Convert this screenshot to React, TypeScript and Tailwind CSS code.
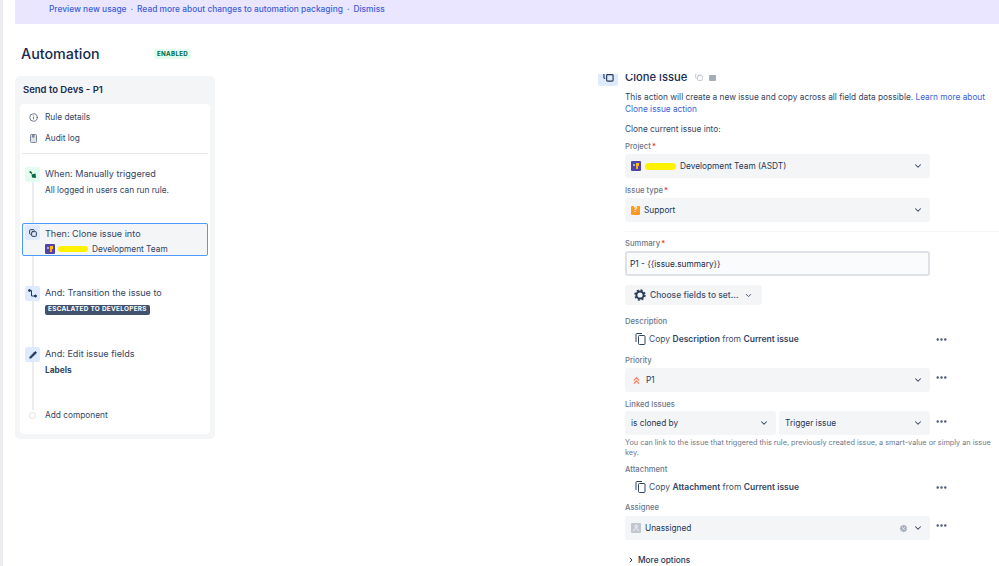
import type { ReactNode } from 'react';
import { ChevronDown, ChevronRight, Info, Pencil, MoreHorizontal, Copy, XCircle, ChevronsUp, User } from 'lucide-react';

function ProjectIcon() {
  return (
    <svg width="10" height="10" viewBox="0 0 10 10" className="shrink-0">
      <rect width="10" height="10" rx="1" fill="#5243AA" />
      <rect x="5" y="2" width="3" height="3" fill="#FFC400" />
      <rect x="2" y="3" width="2" height="2" fill="#B3A5F0" />
      <rect x="5" y="5" width="2" height="3" fill="#FFAB00" />
    </svg>
  );
}

function TransitionIcon() {
  return (
    <svg width="9" height="9" viewBox="0 0 9 9" fill="none" stroke="#253858" strokeWidth="1">
      <path d="M1.5 1.5h2v5.5h4" />
      <circle cx="1.5" cy="1.5" r="1" fill="#253858" />
      <circle cx="7.5" cy="7" r="1" fill="#253858" />
    </svg>
  );
}

function PointerIcon() {
  return (
    <svg width="9" height="9" viewBox="0 0 9 9" fill="#006644">
      <path d="M1 2 L2.5 1 L4.5 3 L3.5 4 Z" />
      <path d="M3.5 4.5 L7.5 3.5 L8 8 L4 7.5 Z" />
    </svg>
  );
}

function AuditIcon() {
  return (
    <svg width="7" height="9" viewBox="0 0 7 9" className="mr-[8px] ml-[8px] shrink-0">
      <rect x="0.5" y="0.5" width="6" height="8" rx="1" fill="#DFE1E6" stroke="#7A869A" />
      <rect x="2" y="0.5" width="2.5" height="3" fill="#7A869A" />
    </svg>
  );
}

function GearIcon() {
  return (
    <svg width="12" height="12" viewBox="0 0 12 12" fill="none" stroke="#253858" className="mr-[4px] shrink-0">
      <circle cx="6" cy="6" r="3.6" strokeWidth="2" />
      <circle cx="6" cy="6" r="5" strokeWidth="1.4" strokeDasharray="2 1.93" />
    </svg>
  );
}

function CopyFieldIcon() {
  return (
    <svg width="11" height="12" viewBox="0 0 11 12" fill="none" stroke="#344563" strokeWidth="1" className="mr-[3px] shrink-0">
      <rect x="3.5" y="2.5" width="6.5" height="9" rx="1" />
      <path d="M1 9V1.5A1 1 0 0 1 2 .5h5" />
    </svg>
  );
}

function StepIcon({ green, children }: { green?: boolean; children: ReactNode }) {
  return (
    <div className={`flex h-[15px] w-[15px] shrink-0 items-center justify-center rounded-[2px] ${green ? 'bg-[#E3FCEF] text-[#006644]' : 'bg-[#DEEBFF] text-[#253858]'}`}>
      {children}
    </div>
  );
}

function Label({ text, required, className = '' }: { text: string; required?: boolean; className?: string }) {
  return (
    <div className={`h-[12px] text-[7.7px] leading-[12px] font-medium text-[#6B778C] ${className}`}>
      {text}
      {required && <span className="ml-[1px] text-[#DE350B]">*</span>}
    </div>
  );
}

function Select({ children, width = 'w-[305px]', clear }: { children: ReactNode; width?: string; clear?: boolean }) {
  return (
    <div className={`flex h-[24px] shrink-0 items-center rounded-[3px] bg-[#F4F5F7] pr-[7px] pl-[6px] text-[8.3px] text-[#253858] ${width}`}>
      <div className="flex min-w-0 flex-1 items-center gap-[4px]">{children}</div>
      {clear && <XCircle size={9} className="mr-[5px] fill-[#A5ADBA] text-[#F4F5F7]" />}
      <ChevronDown size={10} strokeWidth={2.5} className="text-[#344563]" />
    </div>
  );
}

function Dots({ className = '' }: { className?: string }) {
  return <MoreHorizontal size={13} strokeWidth={2.5} className={`ml-[5px] shrink-0 text-[#42526E] ${className}`} />;
}

function CopyRow({ field }: { field: string }) {
  return (
    <div className="flex h-[20px] items-center pl-[10px] text-[8.5px] text-[#42526E]">
      <CopyFieldIcon />
      <span>
        Copy <b className="font-semibold text-[#344563]">{field}</b> from <b className="font-semibold text-[#344563]">Current issue</b>
      </span>
      <Dots className="ml-auto" />
    </div>
  );
}

function Sidebar() {
  return (
    <div className="w-[200px] shrink-0 rounded-[5px] bg-[#F4F5F7] px-[5px] pb-[5px]">
      <div className="flex h-[28px] items-center pl-[3px] text-[9.5px] font-semibold text-[#172B4D]">Send to Devs - P1</div>
      <div className="flex h-[330px] flex-col rounded-[4px] bg-white px-[2px] text-[#344563]">
        <div className="flex h-[50px] flex-col border-b border-[#E6E8EC] pt-[3px] text-[8.3px]">
          <div className="flex h-[21px] items-center"><Info size={9} className="mr-[7px] ml-[7px] text-[#42526E]" />Rule details</div>
          <div className="flex h-[21px] items-center"><AuditIcon />Audit log</div>
        </div>
        <div className="relative flex flex-1 flex-col">
          <div className="absolute top-[20px] bottom-[24px] left-[9.5px] w-[2px] bg-[#EBECF0]" />
          <div className="relative mt-[13px] flex h-[56px] gap-[5px] pl-[3px]">
            <StepIcon green><PointerIcon /></StepIcon>
            <div>
              <div className="text-[9.1px] leading-[13px]">When: Manually triggered</div>
              <div className="mt-[3px] text-[8.3px] leading-[14px]">All logged in users can run rule.</div>
            </div>
          </div>
          <div className="relative flex h-[33px] w-[186px] gap-[5px] rounded-[2px] border border-[#4C9AFF] bg-[#F4F5F7] pl-[2px]">
            <div className="pt-[1px]"><StepIcon><Copy size={8} strokeWidth={3} /></StepIcon></div>
            <div>
              <div className="pt-[3px] text-[9.1px] leading-[13px]">Then: Clone issue into</div>
              <div className="mt-[3px] flex h-[12px] items-center text-[8.3px]">
                <ProjectIcon />
                <span className="mr-[4px] ml-[3px] h-[6px] w-[30px] rounded-full bg-[#FFF200]" />
                Development Team
              </div>
            </div>
          </div>
          <div className="relative mt-[30px] flex h-[61px] gap-[5px] pl-[3px]">
            <StepIcon><TransitionIcon /></StepIcon>
            <div>
              <div className="text-[9.1px] leading-[13px]">And: Transition the issue to</div>
              <div className="mt-[6px] w-fit rounded-[2px] bg-[#42526E] px-[3px] text-[6.4px] leading-[9.5px] font-bold tracking-[0.3px] text-white">ESCALATED TO DEVELOPERS</div>
            </div>
          </div>
          <div className="relative flex h-[57px] gap-[5px] pl-[3px]">
            <StepIcon><Pencil size={8} fill="currentColor" /></StepIcon>
            <div>
              <div className="text-[9.1px] leading-[13px]">And: Edit issue fields</div>
              <div className="mt-[3px] text-[8.3px] leading-[14px] font-bold">Labels</div>
            </div>
          </div>
          <div className="relative mt-[5px] flex items-center text-[8.3px]">
            <span className="mr-[9px] ml-[7px] h-[7px] w-[7px] rounded-full border border-[#DFE1E6] bg-white" />
            Add component
          </div>
        </div>
      </div>
    </div>
  );
}

function CloneForm() {
  return (
    <div className="w-[374px] shrink-0 text-[#253858]">
      <div className="-ml-[27px] flex h-[12px] items-start overflow-hidden">
        <div className="-mt-[3px] flex h-[15px] w-[20px] shrink-0 items-start justify-center rounded-[2px] bg-[#DEEBFF]"><Copy size={11} strokeWidth={2.5} /></div>
        <div className="-mt-[5px] ml-[7px] flex items-center text-[11.2px] leading-[16px] font-medium text-[#172B4D]">
          Clone issue
          <Copy size={8} className="ml-[8px] text-[#A5ADBA]" />
          <span className="mt-[1px] ml-[6px] h-[6px] w-[7px] rounded-[1px] bg-[#A5ADBA]" />
        </div>
      </div>
      <p className="mt-[5px] text-[8.3px] leading-[12px] text-[#344563]">
        This action will create a new issue and copy across all field data possible. <span className="text-[#3B5FD9]">Learn more about Clone issue action</span>
      </p>
      <div className="mt-[8px] text-[8.3px] leading-[12px] text-[#344563]">Clone current issue into:</div>
      <Label text="Project" required className="mt-[6px]" />
      <div className="mt-[1px]">
        <Select><ProjectIcon /><span className="h-[7px] w-[31px] rounded-full bg-[#FFF200]" />Development Team (ASDT)</Select>
      </div>
      <Label text="Issue type" required className="mt-[7px]" />
      <div className="mt-[1px]">
        <Select>
          <span className="flex h-[9px] w-[9px] items-center justify-center rounded-[1px] bg-[#FF991F] text-[7px] font-bold text-white">?</span>
          Support
        </Select>
      </div>
      <div className="mt-[9px] h-px bg-[#F4F5F7]" />
      <Label text="Summary" required className="mt-[6px]" />
      <div className="mt-[1px] flex h-[25px] w-[305px] items-center rounded-[3px] border-2 border-[#DFE1E6] bg-[#FAFBFC] px-[3px] pt-[1px] text-[8.3px] text-[#172B4D]">
        P1 - {'{{issue.summary}}'}
      </div>
      <div className="mt-[9px] flex h-[20px] w-[137px] items-center rounded-[3px] bg-[#F4F5F7] pl-[9px] text-[8.5px] font-medium text-[#42526E]">
        <GearIcon />
        Choose fields to set...
        <ChevronDown size={9} strokeWidth={2.5} className="ml-[6px]" />
      </div>
      <Label text="Description" className="mt-[11px]" />
      <div className="mt-[1px] w-[323px]"><CopyRow field="Description" /></div>
      <Label text="Priority" className="mt-[6px]" />
      <div className="mt-[1px] flex items-start">
        <Select><ChevronsUp size={11} strokeWidth={2.5} className="text-[#FF7452]" />P1</Select>
        <Dots className="mt-[3px]" />
      </div>
      <Label text="Linked Issues" className="mt-[7px]" />
      <div className="flex items-start">
        <div className="flex w-[305px] gap-[3px]">
          <Select width="w-[151px]">is cloned by</Select>
          <Select width="w-[151px]">Trigger issue</Select>
        </div>
        <Dots className="mt-[4px]" />
      </div>
      <p className="mt-[3px] text-[7.3px] leading-[10px] text-[#6B778C]">You can link to the issue that triggered this rule, previously created issue, a smart-value or simply an issue key.</p>
      <Label text="Attachment" className="mt-[6px]" />
      <div className="mt-[1px] w-[323px]"><CopyRow field="Attachment" /></div>
      <Label text="Assignee" className="mt-[5px]" />
      <div className="mt-[2px] flex items-start">
        <Select clear>
          <span className="flex h-[10px] w-[10px] items-center justify-center rounded-[1px] bg-[#C1C7D0]"><User size={8} className="text-white" /></span>
          Unassigned
        </Select>
        <Dots className="mt-[3px]" />
      </div>
      <div className="mt-[14px] flex items-center text-[8.3px] font-medium text-[#253858]">
        <ChevronRight size={8} strokeWidth={3} className="mr-[3px] ml-[2px]" />
        More options
      </div>
    </div>
  );
}

export default function App() {
  return (
    <div className="flex h-[566px] w-[999px] overflow-hidden bg-white font-['Inter',sans-serif]">
      <div className="w-[3px] shrink-0 bg-[#EBECF0]" />
      <div className="ml-[12px] min-w-0 flex-1">
        <div className="flex h-[24px] items-start bg-[#EAE6FF] pt-[3px] pl-[34px] text-[8.4px] leading-[12px] font-medium text-[#3B5FD9]">
          <span>Preview new usage</span>
          <span className="mx-[4px] text-[#6B778C]">·</span>
          <span>Read more about changes to automation packaging</span>
          <span className="mx-[4px] text-[#6B778C]">·</span>
          <span>Dismiss</span>
        </div>
        <div className="flex h-[52px] items-start pt-[20px] pl-[6px]">
          <div className="w-[133px] text-[14.3px] leading-[20px] font-medium text-[#172B4D]">Automation</div>
          <div className="mt-[5px] rounded-[2px] bg-[#E3FCEF] px-[3px] text-[6.2px] leading-[10px] font-bold tracking-[0.3px] text-[#006644]">ENABLED</div>
        </div>
        <div className="flex items-start">
          <Sidebar />
          <div className="-mt-[2px] ml-[410px]"><CloneForm /></div>
        </div>
      </div>
    </div>
  );
}
